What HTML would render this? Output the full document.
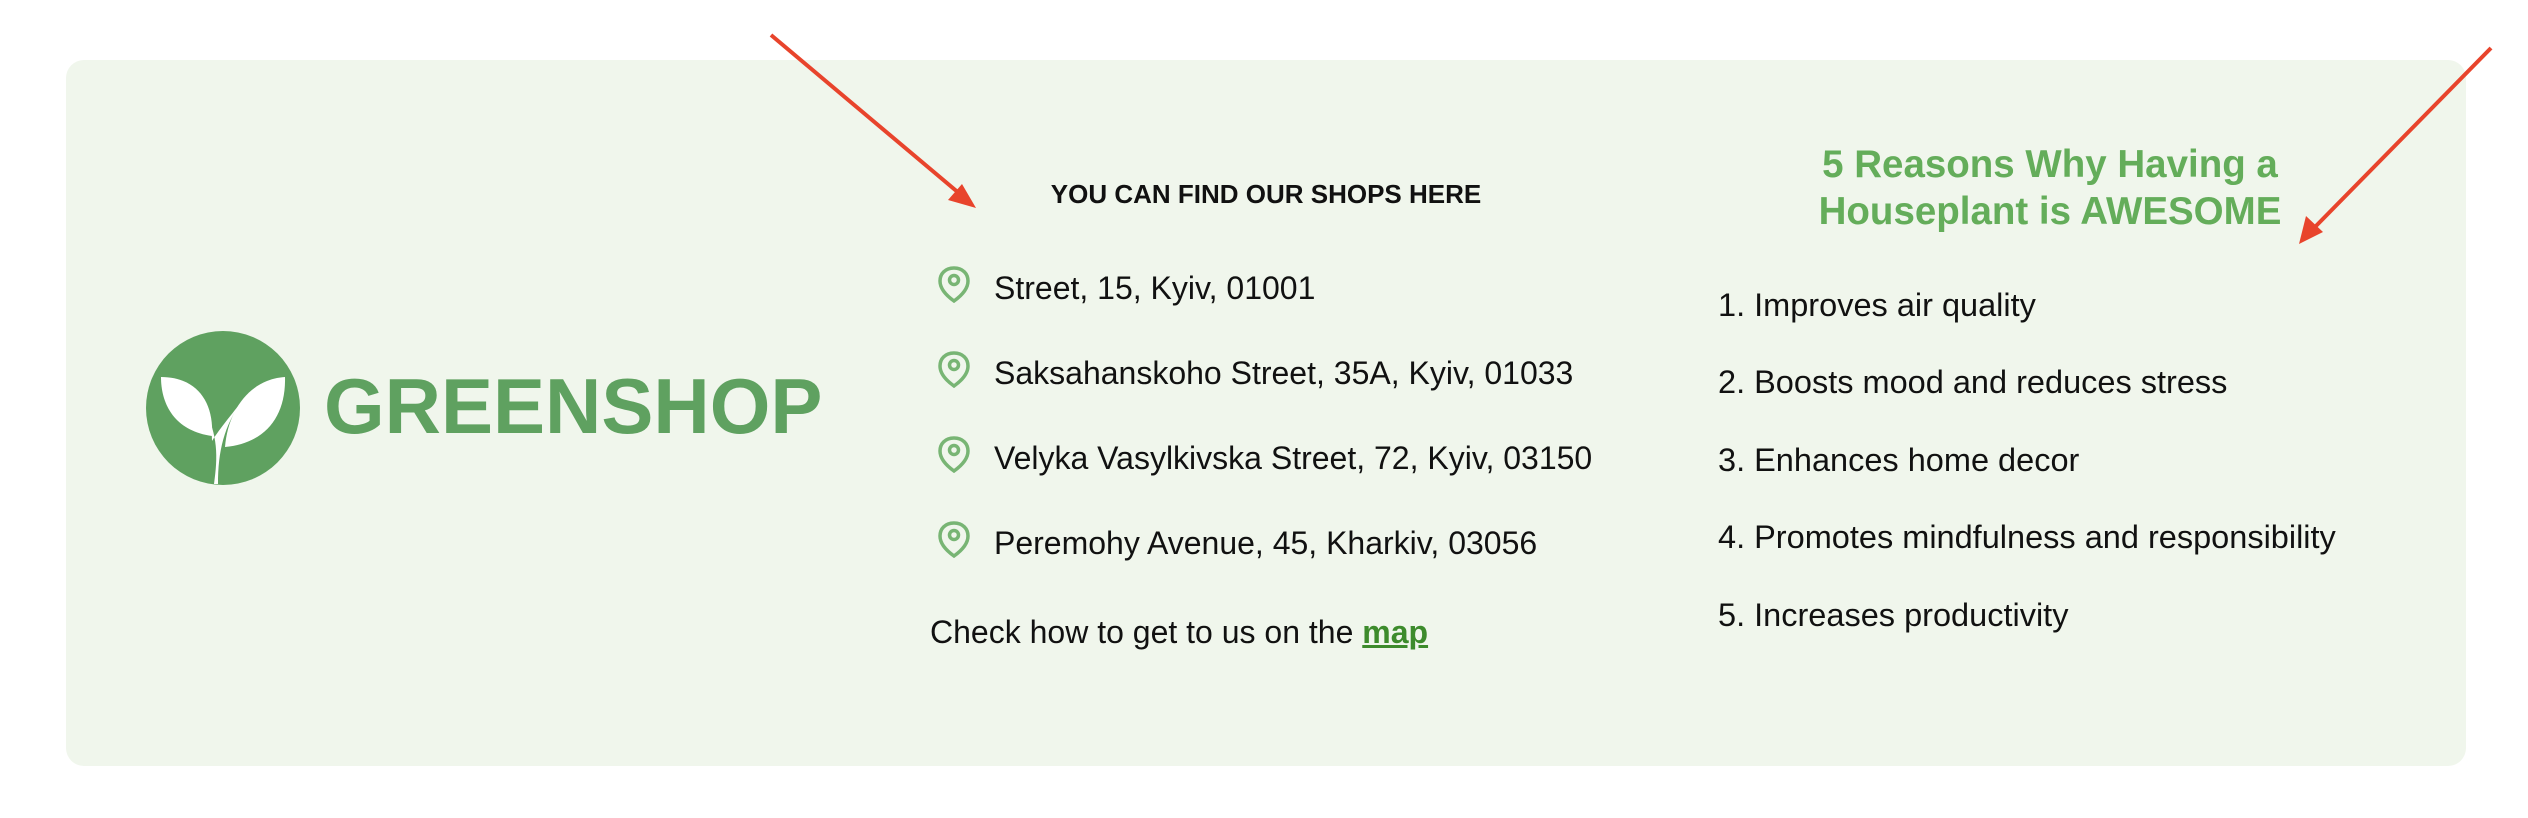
<!DOCTYPE html>
<html><head><meta charset="utf-8"><style>
html,body{margin:0;padding:0;background:#fff;width:2528px;height:818px;overflow:hidden;font-family:"Liberation Sans",sans-serif;}
.panel{position:absolute;left:66px;top:60px;width:2400px;height:706px;background:#f0f6ec;border-radius:18px;}
.t{position:absolute;white-space:nowrap;color:#111;}
.addr{font-size:32px;line-height:38px;left:994px;}
.li{font-size:32.5px;line-height:38px;left:1718px;}
.pin{position:absolute;left:937px;width:34px;height:38px;}
</style></head><body>
<div class="panel"></div>
<svg style="position:absolute;left:146px;top:331px" width="154" height="154" viewBox="0 0 154 154">
<circle cx="77" cy="77" r="77" fill="#5fa160"/>
<path d="M15 46 C50 46 68 70 66 105 C30 100 15 75 15 46 Z" fill="#fff"/>
<path d="M139 46 C105 48 82 78 79 116 C120 112 140 85 139 46 Z" fill="#fff"/>
<path d="M58 76 C72 105 72 125 68 153 L72 153 C72 120 78 95 96 70 C82 88 72 100 66 110 C66 98 63 86 58 76 Z" fill="#fff"/>
</svg>
<div class="t" style="left:324px;top:356px;font-size:78px;line-height:100px;font-weight:bold;color:#5fa160;letter-spacing:0px">GREENSHOP</div>

<div class="t" style="left:1048px;top:178px;width:436px;text-align:center;font-size:26px;line-height:32px;font-weight:bold">YOU CAN FIND OUR SHOPS HERE</div>

<svg class="pin" style="top:265px" viewBox="0 0 34 38"><path d="M17 3 C8 3 3 9 3 16 C3 24 10 31 17 36 C24 31 31 24 31 16 C31 9 26 3 17 3 Z" fill="none" stroke="#78b574" stroke-width="3.5"/><circle cx="17" cy="15" r="4.5" fill="none" stroke="#78b574" stroke-width="3.5"/></svg>
<svg class="pin" style="top:350px" viewBox="0 0 34 38"><path d="M17 3 C8 3 3 9 3 16 C3 24 10 31 17 36 C24 31 31 24 31 16 C31 9 26 3 17 3 Z" fill="none" stroke="#78b574" stroke-width="3.5"/><circle cx="17" cy="15" r="4.5" fill="none" stroke="#78b574" stroke-width="3.5"/></svg>
<svg class="pin" style="top:435px" viewBox="0 0 34 38"><path d="M17 3 C8 3 3 9 3 16 C3 24 10 31 17 36 C24 31 31 24 31 16 C31 9 26 3 17 3 Z" fill="none" stroke="#78b574" stroke-width="3.5"/><circle cx="17" cy="15" r="4.5" fill="none" stroke="#78b574" stroke-width="3.5"/></svg>
<svg class="pin" style="top:520px" viewBox="0 0 34 38"><path d="M17 3 C8 3 3 9 3 16 C3 24 10 31 17 36 C24 31 31 24 31 16 C31 9 26 3 17 3 Z" fill="none" stroke="#78b574" stroke-width="3.5"/><circle cx="17" cy="15" r="4.5" fill="none" stroke="#78b574" stroke-width="3.5"/></svg>

<div class="t addr" style="top:269px">Street, 15, Kyiv, 01001</div>
<div class="t addr" style="top:354px">Saksahanskoho Street, 35A, Kyiv, 01033</div>
<div class="t addr" style="top:439px">Velyka Vasylkivska Street, 72, Kyiv, 03150</div>
<div class="t addr" style="top:524px">Peremohy Avenue, 45, Kharkiv, 03056</div>
<div class="t addr" style="top:613px;left:930px">Check how to get to us on the <b style="color:#3d8b2c;text-decoration:underline">map</b></div>

<div class="t" style="left:1750px;width:600px;top:141px;text-align:center;font-size:38.5px;line-height:47px;font-weight:bold;color:#64ad5a">5 Reasons Why Having a<br>Houseplant is AWESOME</div>

<div class="t li" style="top:286px">1. Improves air quality</div>
<div class="t li" style="top:363px">2. Boosts mood and reduces stress</div>
<div class="t li" style="top:441px">3. Enhances home decor</div>
<div class="t li" style="top:518px">4. Promotes mindfulness and responsibility</div>
<div class="t li" style="top:596px">5. Increases productivity</div>

<svg style="position:absolute;left:0;top:0" width="2528" height="818">
<line x1="771" y1="35" x2="960" y2="194" stroke="#e8442c" stroke-width="4"/>
<polygon points="976,208 948,200 962,184" fill="#e8442c"/>
<line x1="2491" y1="48" x2="2314" y2="228" stroke="#e8442c" stroke-width="4"/>
<polygon points="2299,244 2306,216 2323,232" fill="#e8442c"/>
</svg>
</body></html>
